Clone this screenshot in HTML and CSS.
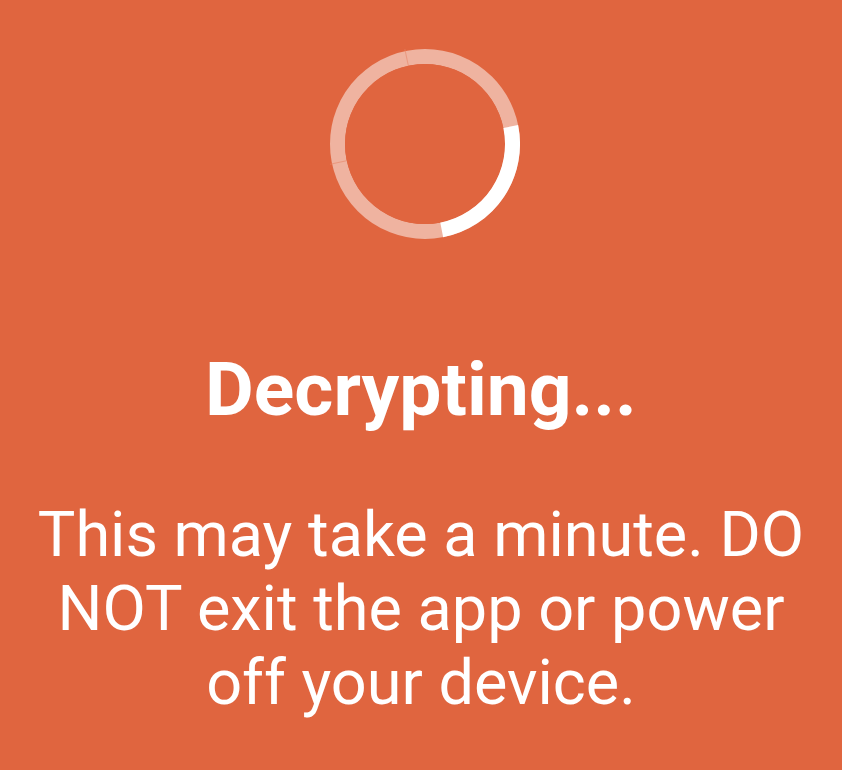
FILE: index.html
```html
<!DOCTYPE html>
<html>
<head>
<meta charset="utf-8">
<link rel="stylesheet" href="styles.css">
</head>
<body>
<main class="screen">
  <div class="spinner">
    <svg width="190" height="190" viewBox="0 0 190 190">
      <circle cx="95" cy="95" r="87.5" fill="none" stroke="#efb3a0" stroke-width="15"/>
      <g stroke="#e8886a" stroke-width="1" opacity="0.6">
        <line x1="95" y1="95" x2="95" y2="-2" transform="rotate(-12 95 95)"/>
        <line x1="95" y1="95" x2="95" y2="-2" transform="rotate(258 95 95)"/>
      </g>
      <circle cx="95" cy="95" r="80" fill="#e0653f"/>
      <circle cx="95" cy="95" r="87.5" fill="none" stroke="#ffffff" stroke-width="15"
        stroke-dasharray="138 412" transform="rotate(-11.5 95 95)"/>
    </svg>
  </div>
  <h1 class="title">Decrypting...</h1>
  <p class="message">This may take a minute. DO NOT exit the app or power off your device.</p>
</main>
</body>
</html>
```
FILE: styles.css
```css
html, body {
  margin: 0;
  padding: 0;
  background: #e0653f;
}
.screen {
  width: 842px;
  height: 770px;
  box-sizing: border-box;
  padding: 49px 30px 0;
  display: flex;
  flex-direction: column;
  align-items: center;
  font-family: Roboto, "Noto Sans", sans-serif;
  color: #ffffff;
  text-align: center;
}
.spinner {
  width: 190px;
  height: 190px;
  margin-left: 7px;
}
.spinner svg {
  display: block;
}
.title {
  margin: 106px 0 0;
  font-size: 75px;
  font-weight: 700;
  line-height: normal;
}
.message {
  margin: 65px 0 0;
  font-size: 63px;
  font-weight: 400;
  line-height: 74px;
}
```
